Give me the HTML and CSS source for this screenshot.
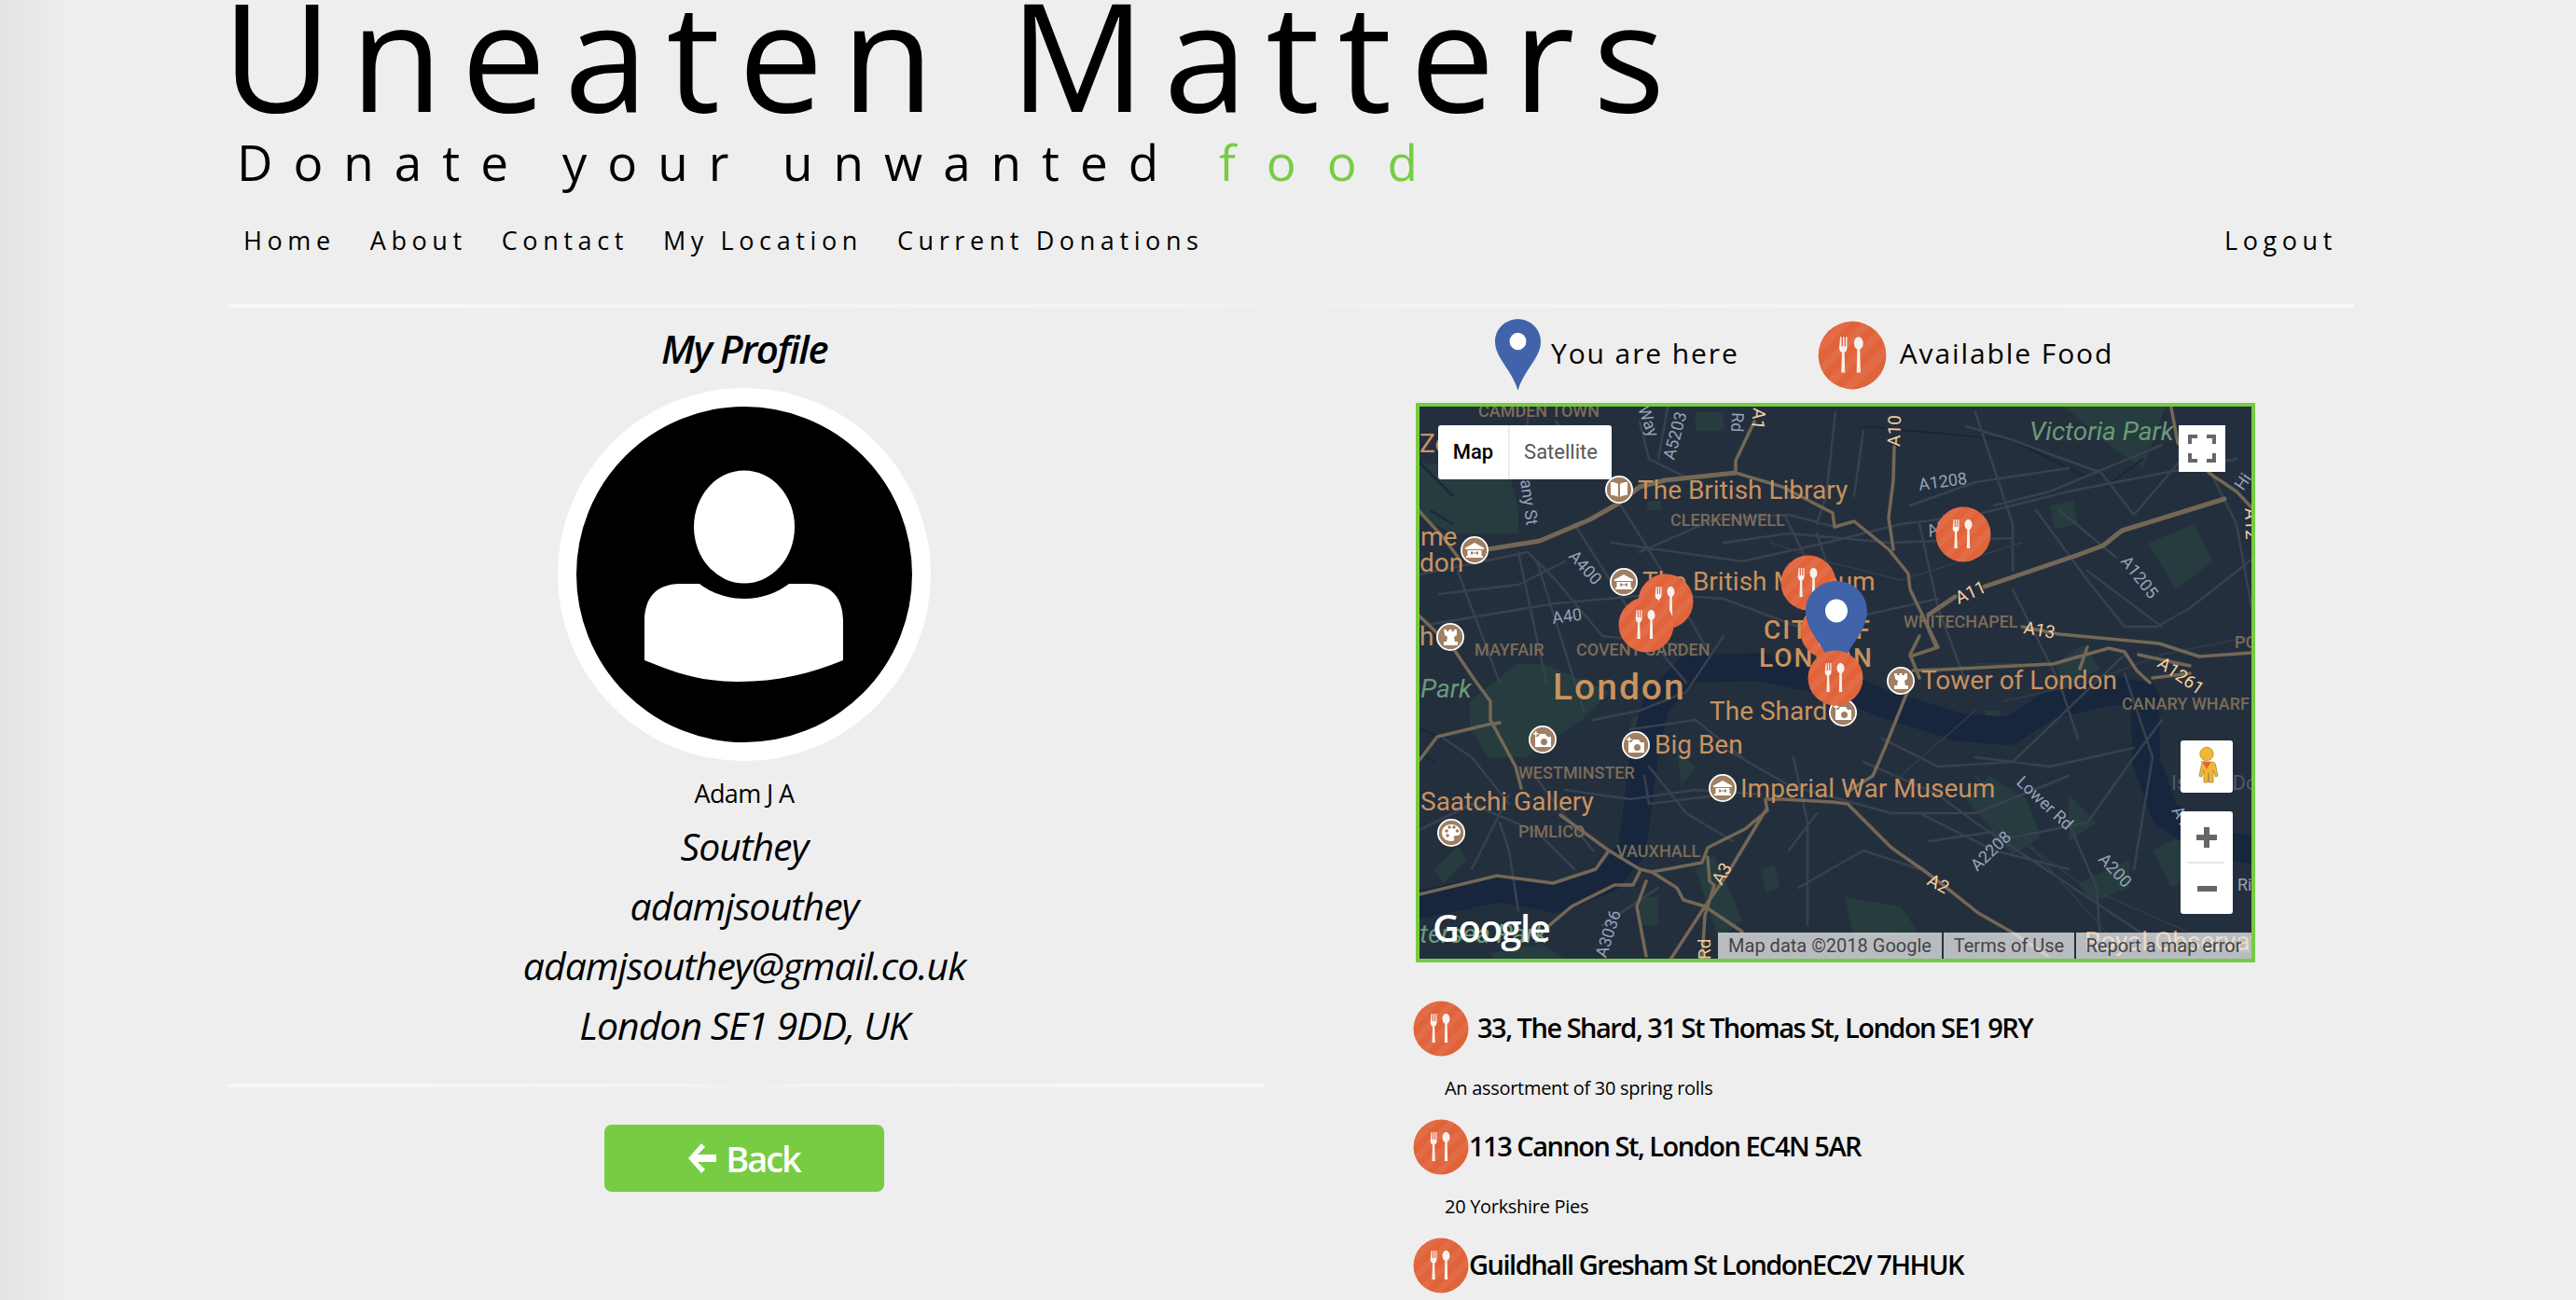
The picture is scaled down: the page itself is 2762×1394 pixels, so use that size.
FILE: index.html
```html
<!DOCTYPE html>
<html lang="en">
<head>
    <meta charset="UTF-8">
    <meta name="viewport" content="width=device-width, initial-scale=1.0">
    <title>Uneaten Matters | My Profile</title>
    <link rel="stylesheet" href="styles.css">
</head>
<body>
    <!-- shared icons -->
    <svg class="defs" width="0" height="0">
        <defs>
            <pattern id="stripes" width="14" height="14" patternUnits="userSpaceOnUse" patternTransform="rotate(-45)">
                <rect width="14" height="7" fill="#ffffff" opacity="0.06"></rect>
            </pattern>
            <symbol id="food" viewBox="-30 -30 60 60">
                <circle r="29.5" fill="#e0633a"></circle>
                <circle r="29.5" fill="url(#stripes)"></circle>
                <path fill="#f6f1ec" d="M-10.5 -16h1.2v8h1.2v-8h1.2v8h1.2v-8h1.2v9.500c0 2.500-1.200 3.500-2.300 4l0.500 17.500h-3.200l0.500-17.500c-1.100-0.500-2.300-1.500-2.300-4z"></path>
                <path fill="#f6f1ec" d="M5.500 -16c2.400 0 4 2.600 4 5.500 0 2.800-1.400 4.800-2.800 5.300l0.500 20.200h-3.400l0.500-20.200c-1.400-0.500-2.800-2.500-2.800-5.300 0-2.900 1.600-5.500 4-5.500z"></path>
            </symbol>
            <symbol id="pin" viewBox="0 0 66 103">
                <path fill="#4163aa" d="M33 0c18.500 0 33 14.500 33 32.500 0 9-3.500 17-9 26-9 14.500-19 27-24 44.500-5-17.500-15-30-24-44.500-5.500-9-9-17-9-26C0 14.500 14.500 0 33 0z"></path>
                <ellipse cx="33" cy="32" rx="12" ry="12.500" fill="#ffffff"></ellipse>
            </symbol>
            <symbol id="poi-museum" viewBox="-15 -15 30 30">
                <circle r="15" fill="#ffffff"></circle><circle r="13.200" fill="#a07f62"></circle>
                <path fill="#ffffff" d="M0 -8l10 5.500v1.500h-20v-1.500zM-7.500 0h15v6h1.500v2h-18v-2h1.500z"></path>
                <path fill="#a07f62" d="M-4 1.500h2v3h-2zM2 1.500h2v3h-2zM-2 2.500h4v1h-4z"></path>
            </symbol>
            <symbol id="poi-castle" viewBox="-15 -15 30 30">
                <circle r="15" fill="#ffffff"></circle><circle r="13.200" fill="#a07f62"></circle>
                <path fill="#ffffff" d="M-7 -8h3v2h2.500v-2h3v2h2.500v-2h3v6l-3 2 1 5h3v4h-15v-4h3l1-5-3-2z"></path>
            </symbol>
            <symbol id="poi-camera" viewBox="-15 -15 30 30">
                <circle r="15" fill="#ffffff"></circle><circle r="13.200" fill="#a07f62"></circle>
                <path fill="#ffffff" d="M-8 -3h3l2-3h6l2 3h4v11h-17zM-8 -9h1.500v2h2v1.500h-2v2h-1.500v-2h-2v-1.500h2z"></path>
                <circle cx="1.500" cy="2.500" r="3.500" fill="#a07f62"></circle>
            </symbol>
            <symbol id="poi-book" viewBox="-15 -15 30 30">
                <circle r="15" fill="#ffffff"></circle><circle r="13.200" fill="#a07f62"></circle>
                <path fill="#ffffff" d="M-9 -8c3 0 6 0.500 8 2v14c-2-1.500-5-2-8-2zM9 -8c-3 0-6 0.500-8 2v14c2-1.500 5-2 8-2z"></path>
            </symbol>
            <symbol id="poi-palette" viewBox="-15 -15 30 30">
                <circle r="15" fill="#ffffff"></circle><circle r="13.200" fill="#a07f62"></circle>
                <path fill="#ffffff" d="M0 -9c6 0 10 4 10 8 0 3-2 4-4 4-3 0-4 1-3 3 1 2 0 3-3 3-6 0-10-4-10-9s4-9 10-9z"></path>
                <g fill="#a07f62"><circle cx="-5" cy="-2" r="1.800"></circle><circle cx="-2" cy="-6" r="1.800"></circle><circle cx="3" cy="-6" r="1.800"></circle><circle cx="6.500" cy="-2" r="1.800"></circle><circle cx="-4" cy="3" r="1.800"></circle></g>
            </symbol>
        </defs>
    </svg>

    <div class="page">
        <header>
            <h1 class="site-title">Uneaten Matters</h1>
            <p class="site-sub">Donate your unwanted <span class="green">food</span></p>
            <nav class="nav">
                <div class="nav-left">
                    <a href="#">Home</a>
                    <a href="#">About</a>
                    <a href="#">Contact</a>
                    <a href="#">My Location</a>
                    <a href="#">Current Donations</a>
                </div>
                <a href="#" class="logout">Logout</a>
            </nav>
            <hr class="rule">
        </header>

        <main class="columns">
            <section class="profile">
                <h2 class="profile-title">My Profile</h2>
                <svg class="avatar" viewBox="0 0 400 400">
                    <circle cx="200" cy="200" r="190" fill="#000000" stroke="#ffffff" stroke-width="20"></circle>
                    <ellipse cx="200" cy="149" rx="54" ry="60.500" fill="#ffffff"></ellipse>
                    <path fill="#ffffff" d="M152 210c13 10 30 16 48 16s35-6 48-16h20c26 0 38 16 38 40v42c-34 14-70 23-113 23-40 0-68-10-100-23v-42c0-24 12-40 38-40z"></path>
                </svg>
                <p class="first-name">Adam J A</p>
                <p class="detail">Southey</p>
                <p class="detail">adamjsouthey</p>
                <p class="detail">adamjsouthey@gmail.co.uk</p>
                <p class="detail">London SE1 9DD, UK</p>
                <hr class="rule rule-short">
                <a href="#" class="back-btn">
                    <svg class="back-arrow" viewBox="0 0 30 32"><path fill="#ffffff" d="M14 0l4 4-8 8h20v8H10l8 8-4 4L0 16z"></path></svg>
                    Back
                </a>
            </section>

            <section class="donations">
                <div class="legend">
                    <svg class="legend-pin"><use href="#pin"></use></svg>
                    <span class="legend-text">You are here</span>
                    <svg class="legend-food"><use href="#food"></use></svg>
                    <span class="legend-text">Available Food</span>
                </div>

                <div class="map">
                    <svg class="map-canvas" viewBox="4 4 892 592">
                        <rect class="m-land" x="0" y="0" width="900" height="600"></rect>

                        <!-- parks -->
                        <g class="m-park">
                            <path d="M0 65h55l40-10 15 60v25h-70l-40-20zM300 10h30v20h-30zM690 0l115 0-25 70-30-20zM248 105h15v10h-15z"></path>
                            <path d="M58 320l50-40 30 0 70 30-30 30-60 40-40 0-20-30zM230 340l20-10 10 25-20 15zM280 375l20 15-15 20zM20 500l25-25 10 15-25 25z"></path>
                            <path d="M615 400l40 25 15 40-30 20-50-60zM700 420l30 30-30 20zM710 515l55-25 0 30-40 15zM460 530l60 10 20 30-70 5zM790 480l40-20 15 40-35 20z"></path>
                            <path d="M685 280l30-20 20 25-40 20zM785 150l50-20 20 40-40 30zM680 110l25-5 5 25-25 5z"></path>
                            <path d="M80 590l55-10 30 20h-80zM300 500l20-15 30 70-25 20zM240 530l20 0 0 30-20 0zM370 500l15-5 5 25-15 5z"></path>
                            <path d="M435 300l30-10 20 20-20 15zM610 330l15 0 5 15-15 5z"></path>
                        </g>

                        <!-- water -->
                        <path class="m-water" d="M-5 540 90 520 150 532 207 510 232 478 246 367 258 322 293 285 367 283 450 300 500 322 583 348 637 352 680 324 750 308 782 315 783 383 803 440 850 473 905 480"></path>
                        <path class="m-water-thin" d="M15 115 40 130M0 60 40 100M480 25 640 40 720 80M740 90 780 60M-5 345 30 360M-5 370 20 385"></path>

                        <!-- minor roads -->
                        <path class="m-road" d="M0 185 120 160 150 190 200 250 290 260M25 205 110 195 160 170M0 240 150 215 260 205 330 210 410 240M45 180 90 300M110 160 140 300M130 170 180 330M170 130 240 240 290 300M220 110 270 190 310 260M240 160 320 125 400 120 450 133M210 150 350 170 440 150 520 130 600 120 700 95 880 60M395 120 430 190M150 20 190 60 230 100M240 20 250 60 290 80M120 15 118 80M270 5 260 60M450 10 440 100 430 130M480 30 470 100M590 25 640 40 735 75 770 120 830 50M530 110 600 85 700 70M600 10 620 70 640 130 640 180M620 110 680 95 800 45M640 200 690 300 710 360M665 115 720 190 760 240 795 240 830 220 900 165M690 115 750 165M850 70 880 130 900 240M800 240 760 210 720 180M330 150 400 140 510 150 640 145M430 140 460 230M470 230 560 210M540 130 560 220 590 300M0 460 60 430 130 460 170 500M30 360 60 380 100 430M100 420 60 500M120 390 150 430 190 480M250 390 290 440 340 470M330 370 400 410 510 440 600 440 700 400M405 380 420 450 420 560M480 385 560 420 600 450 720 530M540 440 620 480 700 500M620 470 720 450 770 380 800 340M600 380 680 390 770 370M500 360 560 390 640 385 760 270M760 290 790 380 770 500M700 450 730 520 735 590M720 530 780 570 900 590M200 560 260 520M230 350 300 340 350 380M190 340 240 330 290 310 330 250M330 420 250 430 245 400M160 415 230 425 300 415 370 420M110 545 100 480 90 450M400 480 430 440M410 520 480 480 540 500M550 470 620 460"></path>
                        <path class="m-road-thin" d="M380 150 440 170 520 190 650 150M630 320 720 300 800 270 900 250M620 450 720 520 880 590M600 400 680 500 760 590M520 400 600 330M600 280 700 280"></path>

                        <!-- main roads -->
                        <path class="m-main" d="M343 75 393 90 447 118 449 133 470 127 507 157 528 183 530 200 543 227 558 262M343 75V62L363 20M513 47 512 83 507 123 512 157M0 112 30 145 45 165M0 225 40 263 63 297 80 320 80 340 107 390 113 413M155 442 207 480 240 500 253 503 307 493 313 477 353 457 377 437 375 427M4 383 23 358 77 345 90 343M4 527 87 507 147 515 193 500 207 480M140 563 167 540 213 517 233 517 240 503M247 513 237 540 247 593M253 503 280 520 287 533 310 540 350 567M375 437 333 507 310 540 273 597M313 487 315 513 320 517 310 550 307 597M375 425 393 425 447 428 463 430 510 477 547 503 573 523 603 547 640 568 677 593M527 310 503 370 490 400 463 417M650 240 690 248 797 258 840 272 897 268"></path>
                        <path class="m-main-wide" d="M77 157 133 148 187 125 217 108 240 90 267 83 343 75M550 227 578 208M610 197 710 163 737 153 757 137 867 103"></path>
                        <path class="m-main" d="M533 287 563 286 683 280 743 263 760 267 773 287 787 300M540 250 530 270 540 295M543 227 560 262 530 272M720 262 712 285M810 5 817 43 853 77 880 95 897 113M775 270 830 282M790 295 830 290"></path>

                        <!-- labels -->
                        <g class="m-labels">
                            <text class="l-area" x="67" y="15">CAMDEN TOWN</text>
                            <text class="l-poi" x="4" y="53">Zo</text>
                            <text class="l-poi" x="238" y="103">The British Library</text>
                            <text class="l-area" x="273" y="132">CLERKENWELL</text>
                            <text class="l-poi" x="5" y="153">me</text>
                            <text class="l-poi" x="4" y="181">don</text>
                            <text class="l-poi" x="243" y="201">The British Museum</text>
                            <text class="l-poi" x="4" y="260">h</text>
                            <text class="l-area" x="63" y="271">MAYFAIR</text>
                            <text class="l-area" x="172" y="271">COVENT GARDEN</text>
                            <text class="l-city" x="373" y="253">CITY OF</text>
                            <text class="l-city" x="368" y="283">LONDON</text>
                            <text class="l-london" x="147" y="318">London</text>
                            <text class="l-park" x="5" y="316">Park</text>
                            <text class="l-poi" x="315" y="340">The Shard</text>
                            <text class="l-poi" x="256" y="376">Big Ben</text>
                            <text class="l-area" x="110" y="403">WESTMINSTER</text>
                            <text class="l-poi" x="348" y="423">Imperial War Museum</text>
                            <text class="l-poi" x="5" y="437">Saatchi Gallery</text>
                            <text class="l-area" x="110" y="466">PIMLICO</text>
                            <text class="l-area" x="215" y="487">VAUXHALL</text>
                            <text class="l-park" x="4" y="579">tersea Park</text>
                            <text class="l-park" x="658" y="40">Victoria Park</text>
                            <text class="l-area" x="523" y="241">WHITECHAPEL</text>
                            <text class="l-area" x="878" y="263">POPLAR</text>
                            <text class="l-poi" x="542" y="307">Tower of London</text>
                            <text class="l-area" x="757" y="329">CANARY WHARF</text>
                            <text class="l-poi" x="717" y="587">Royal Observatory</text>
                            <text class="l-isle" x="810" y="415">Isle of Dogs</text>
                            <text class="l-road" x="881" y="523">Ri</text>

                            <text class="l-road" transform="translate(112 83) rotate(82)">any St</text>
                            <text class="l-road" transform="translate(238 6) rotate(70)">Way</text>
                            <text class="l-road" transform="translate(277 62) rotate(-75)">A5203</text>
                            <text class="l-road" transform="translate(339 10) rotate(92)">Rd</text>
                            <text class="l-hwy" transform="translate(362 5) rotate(95)">A1</text>
                            <text class="l-road" transform="translate(163 165) rotate(48)">A400</text>
                            <text class="l-road" transform="translate(147 237) rotate(-8)">A40</text>
                            <text class="l-hwy" transform="translate(519 47) rotate(-88)">A10</text>
                            <text class="l-road" transform="translate(540 94) rotate(-8)">A1208</text>
                            <text class="l-road" transform="translate(551 144) rotate(-22)">A1</text>
                            <text class="l-hwy" transform="translate(582 216) rotate(-24)">A11</text>
                            <text class="l-hwy" transform="translate(651 247) rotate(10)">A13</text>
                            <text class="l-road" transform="translate(755 170) rotate(52)">A1205</text>
                            <text class="l-hwy" transform="translate(794 282) rotate(35)">A1261</text>
                            <text class="l-hwy" transform="translate(889 113) rotate(88)">A12</text>
                            <text class="l-road" transform="translate(887 95) rotate(-55)">Hi</text>
                            <text class="l-hwy" transform="translate(328 518) rotate(-60)">A3</text>
                            <text class="l-road" transform="translate(204 596) rotate(-72)">A3036</text>
                            <text class="l-hwy" transform="translate(316 597) rotate(-90)">Rd</text>
                            <text class="l-road" transform="translate(643 408) rotate(43)">Lower Rd</text>
                            <text class="l-road" transform="translate(602 503) rotate(-44)">A2208</text>
                            <text class="l-road" transform="translate(731 490) rotate(47)">A200</text>
                            <text class="l-road" transform="translate(810 437) rotate(60)">A1</text>
                            <text class="l-hwy" transform="translate(547 516) rotate(28)">A2</text>
                            <text class="l-google" x="18" y="578">Google</text>
                        </g>

                        <!-- places -->
                        <use href="#poi-book" x="203" y="78" width="30" height="30"></use>
                        <use href="#poi-museum" x="48" y="143" width="30" height="30"></use>
                        <use href="#poi-museum" x="208" y="177" width="30" height="30"></use>
                        <use href="#poi-castle" x="22" y="236" width="30" height="30"></use>
                        <use href="#poi-camera" x="121" y="346" width="30" height="30"></use>
                        <use href="#poi-camera" x="221" y="352" width="30" height="30"></use>
                        <use href="#poi-museum" x="314" y="398" width="30" height="30"></use>
                        <use href="#poi-palette" x="23" y="446" width="30" height="30"></use>
                        <use href="#poi-camera" x="443" y="317" width="30" height="30"></use>
                        <use href="#poi-castle" x="505" y="283" width="30" height="30"></use>

                        <!-- markers, in stacking order -->
                        <use href="#food" x="557" y="111" width="60" height="60"></use>
                        <use href="#food" x="238" y="183" width="60" height="60"></use>
                        <use href="#food" x="217" y="208" width="60" height="60"></use>
                        <use href="#food" x="391" y="163" width="60" height="60"></use>
                        <use href="#food" x="412" y="215" width="60" height="60"></use>
                        <use href="#pin" x="418" y="191" width="66" height="103"></use>
                        <use href="#food" x="420" y="265" width="60" height="60"></use>
                    </svg>

                    <div class="map-type">
                        <span class="map-type-on">Map</span>
                        <span class="map-type-off">Satellite</span>
                    </div>
                    <div class="map-btn map-full">
                        <svg viewBox="0 0 50 50" width="50" height="50"><path fill="#666666" d="M10 10h10v4h-6v6h-4zM40 10v10h-4v-6h-6v-4zM10 40v-10h4v6h6v4zM40 40h-10v-4h6v-6h4z"></path></svg>
                    </div>
                    <div class="map-btn map-peg">
                        <svg viewBox="0 0 56 56" width="56" height="56">
                            <circle cx="28" cy="14.500" r="7.200" fill="#f1b733" stroke="#b58a2a" stroke-width="0.8"></circle>
                            <path fill="#f1b733" stroke="#a58546" stroke-width="0.8" d="M22 23h12c2 0 3 1 3.500 3l2.500 12-2.500 1-2.500-7v13h-4.500v-10h-1v10h-4.500v-13l-2.500 7-2.500-1 2.500-12c0.500-2 1.500-3 3.500-3z"></path>
                            <path fill="#d9692c" d="M23.500 23h9l-4.500 8z"></path>
                        </svg>
                    </div>
                    <div class="map-btn map-zoom">
                        <svg viewBox="0 0 56 110" width="56" height="110">
                            <path fill="#666666" d="M25 17h6v8h8v6h-8v8h-6v-8h-8v-6h8z"></path>
                            <rect x="8" y="54" width="38" height="2" fill="#e4e4e4"></rect>
                            <rect x="18" y="80" width="21" height="6" fill="#666666"></rect>
                        </svg>
                    </div>
                    <div class="map-attrib">
                        <span class="attrib-data">Map data ©2018 Google</span>
                        <span class="attrib-terms">Terms of Use</span>
                        <span class="attrib-report">Report a map error</span>
                    </div>
                </div>

                <ul class="food-list">
                    <li>
                        <div class="food-row food-row-first">
                            <svg class="food-icon"><use href="#food"></use></svg>
                            <span class="food-address">33, The Shard, 31 St Thomas St, London SE1 9RY</span>
                        </div>
                        <p class="food-desc">An assortment of 30 spring rolls</p>
                    </li>
                    <li>
                        <div class="food-row">
                            <svg class="food-icon"><use href="#food"></use></svg>
                            <span class="food-address">113 Cannon St, London EC4N 5AR</span>
                        </div>
                        <p class="food-desc">20 Yorkshire Pies</p>
                    </li>
                    <li>
                        <div class="food-row">
                            <svg class="food-icon"><use href="#food"></use></svg>
                            <span class="food-address">Guildhall Gresham St LondonEC2V 7HHUK</span>
                        </div>
                    </li>
                </ul>
            </section>
        </main>
    </div>
</body>
</html>
```

FILE: styles.css
```css
html, body {
    height: 100%;
}

body {
    margin: 0;
    font-family: 'Open Sans', 'Noto Sans', sans-serif;
    color: #000;
    background: linear-gradient(90deg, #e3e3e3, #eeeeee 70px);
    overflow: hidden;
}

.defs {
    display: block;
    height: 0;
}

.page {
    width: 2279px;
    margin-left: 245px;
}

/* header */
.site-title {
    margin: 0 0 0 -7px;
    font-size: 162px;
    font-weight: 400;
    line-height: 114px;
    letter-spacing: 19.5px;
}

.site-sub {
    margin: 20px 0 0;
    padding-left: 9px;
    font-size: 53px;
    font-weight: 400;
    line-height: 80px;
    letter-spacing: 22px;
}

.green {
    margin-left: 7px;
    color: #77cc44;
    letter-spacing: 33px;
}

.nav {
    display: flex;
    justify-content: space-between;
    margin-top: 24px;
    padding: 0 18px 0 16px;
    line-height: 40px;
    font-size: 27px;
    font-weight: 400;
    letter-spacing: 5.6px;
}

.nav a {
    color: #000;
    text-decoration: none;
}

.nav-left {
    display: flex;
    gap: 37px;
}

.rule {
    height: 4px;
    margin: 48px 0 0;
    border: 0;
    background: linear-gradient(90deg, #f7f7f7, #f4f4f4 44%, #eeeeee 50%, #f4f4f4 56%, #f7f7f7);
}

/* columns */
.columns {
    display: flex;
}

.profile {
    box-sizing: border-box;
    width: 1110px;
    padding-right: 4px;
    text-align: center;
}

.profile-title {
    margin: 14px 0 0;
    font-size: 42px;
    font-weight: 600;
    font-style: italic;
    line-height: 60px;
    letter-spacing: -1.5px;
}

.avatar {
    display: block;
    width: 400px;
    height: 400px;
    margin: 12px auto 0;
}

.first-name {
    margin: 15px 0 0;
    font-size: 27px;
    line-height: 40px;
    letter-spacing: -0.6px;
}

.detail {
    margin: 0;
    font-size: 41px;
    font-style: italic;
    line-height: 64px;
    letter-spacing: -1px;
}

.first-name + .detail {
    margin-top: 4px;
}

.rule-short {
    margin: 31px -4px 0 0;
}

.back-btn {
    display: flex;
    align-items: center;
    justify-content: center;
    gap: 10px;
    width: 300px;
    height: 72px;
    margin: 40px auto 0;
    border-radius: 8px;
    background: #77cc44;
    color: #fff;
    font-size: 38px;
    font-weight: 600;
    letter-spacing: -2px;
    text-decoration: none;
}

.back-arrow {
    width: 30px;
    height: 32px;
}

/* right column */
.donations {
    padding-left: 163px;
    width: 900px;
}

.legend {
    display: flex;
    align-items: center;
    height: 77px;
    margin: 12px 0 13px;
    padding-left: 85px;
}

.legend-pin {
    width: 49px;
    height: 77px;
    margin-right: 11px;
}

.legend-food {
    width: 74px;
    height: 74px;
    margin: 0 14px 0 84px;
}

.legend-text {
    font-size: 30px;
    letter-spacing: 1.9px;
    line-height: 40px;
    padding-bottom: 4px;
}

/* map */
.map {
    position: relative;
    box-sizing: border-box;
    width: 900px;
    height: 600px;
    border: 4px solid #74cc3f;
    overflow: hidden;
    font-family: Roboto, sans-serif;
}

.map-canvas {
    display: block;
    width: 892px;
    height: 592px;
}

.m-land { fill: #242f3e; }
.m-park { fill: #263c3f; }

.m-water {
    fill: none;
    stroke: #17263c;
    stroke-width: 30;
    stroke-linejoin: round;
}

.m-water-thin {
    fill: none;
    stroke: #17263c;
    stroke-width: 2;
}

.m-road,
.m-road-thin,
.m-main,
.m-main-wide {
    fill: none;
    stroke-linecap: round;
    stroke-linejoin: round;
}

.m-road { stroke: #38414e; stroke-width: 2.5; }
.m-road-thin { stroke: #323c4a; stroke-width: 1.5; }
.m-main { stroke: #746855; stroke-width: 3.5; }
.m-main-wide { stroke: #746855; stroke-width: 5; }

.m-labels text {
    font-family: Roboto, sans-serif;
}

.l-poi {
    font-size: 28px;
    fill: #c8935f;
}

.l-area {
    font-size: 18px;
    font-weight: 500;
    fill: #7d6c58;
}

.l-city {
    font-size: 28px;
    font-weight: 500;
    letter-spacing: 2px;
    fill: #c8935f;
}

.l-london {
    font-size: 39px;
    font-weight: 500;
    letter-spacing: 2px;
    fill: #c8935f;
}

.l-park {
    font-size: 28px;
    font-style: italic;
    fill: #6b9a76;
}

.l-isle {
    font-size: 22px;
    fill: #4f5a64;
}

.l-road {
    font-size: 18px;
    fill: #97a3ba;
}

.l-hwy {
    font-size: 19px;
    fill: #f3d19c;
}

.m-labels .l-google {
    font-family: 'Open Sans', sans-serif;
    font-size: 40px;
    font-weight: 600;
    letter-spacing: -1.5px;
    fill: #ffffff;
}

.map-type,
.map-btn,
.map-attrib {
    position: absolute;
}

.map-type {
    left: 20px;
    top: 20px;
    display: flex;
    width: 186px;
    height: 58px;
    border-radius: 3px;
    background: #fff;
    font-size: 22px;
    line-height: 58px;
    text-align: center;
}

.map-type-on {
    width: 75px;
    font-weight: 500;
    color: #000;
    border-right: 2px solid #ececec;
}

.map-type-off {
    flex: 1;
    color: #565656;
}

.map-btn {
    background: #fff;
    border-radius: 3px;
}

.map-btn svg {
    display: block;
}

.map-full {
    left: 814px;
    top: 20px;
    width: 50px;
    height: 50px;
    border-radius: 0;
}

.map-peg {
    left: 816px;
    top: 358px;
    width: 56px;
    height: 56px;
}

.map-zoom {
    left: 816px;
    top: 434px;
    width: 56px;
    height: 110px;
}

.map-attrib {
    left: 320px;
    bottom: 0;
    right: 0;
    display: flex;
    gap: 2px;
    height: 28px;
    font-size: 20px;
    line-height: 28px;
    color: #444;
}

.map-attrib span {
    background: rgba(255, 255, 255, 0.68);
    text-align: center;
}

.attrib-data { width: 240px; }
.attrib-terms { width: 140px; }
.attrib-report { flex: 1; }

/* donation list */
.food-list {
    margin: 41px 0 0;
    padding: 0;
    list-style: none;
}

.food-row {
    display: flex;
    align-items: center;
    height: 60px;
    margin-left: -3px;
    font-size: 29px;
    font-weight: 600;
    letter-spacing: -1.5px;
}

.food-address {
    padding-bottom: 4px;
}

.food-row-first .food-address {
    padding-left: 9px;
}

.food-icon {
    flex: none;
    width: 60px;
    height: 60px;
}

.food-desc {
    margin: 0;
    padding-left: 31px;
    font-size: 20px;
    line-height: 67px;
    letter-spacing: -0.3px;
}
```
